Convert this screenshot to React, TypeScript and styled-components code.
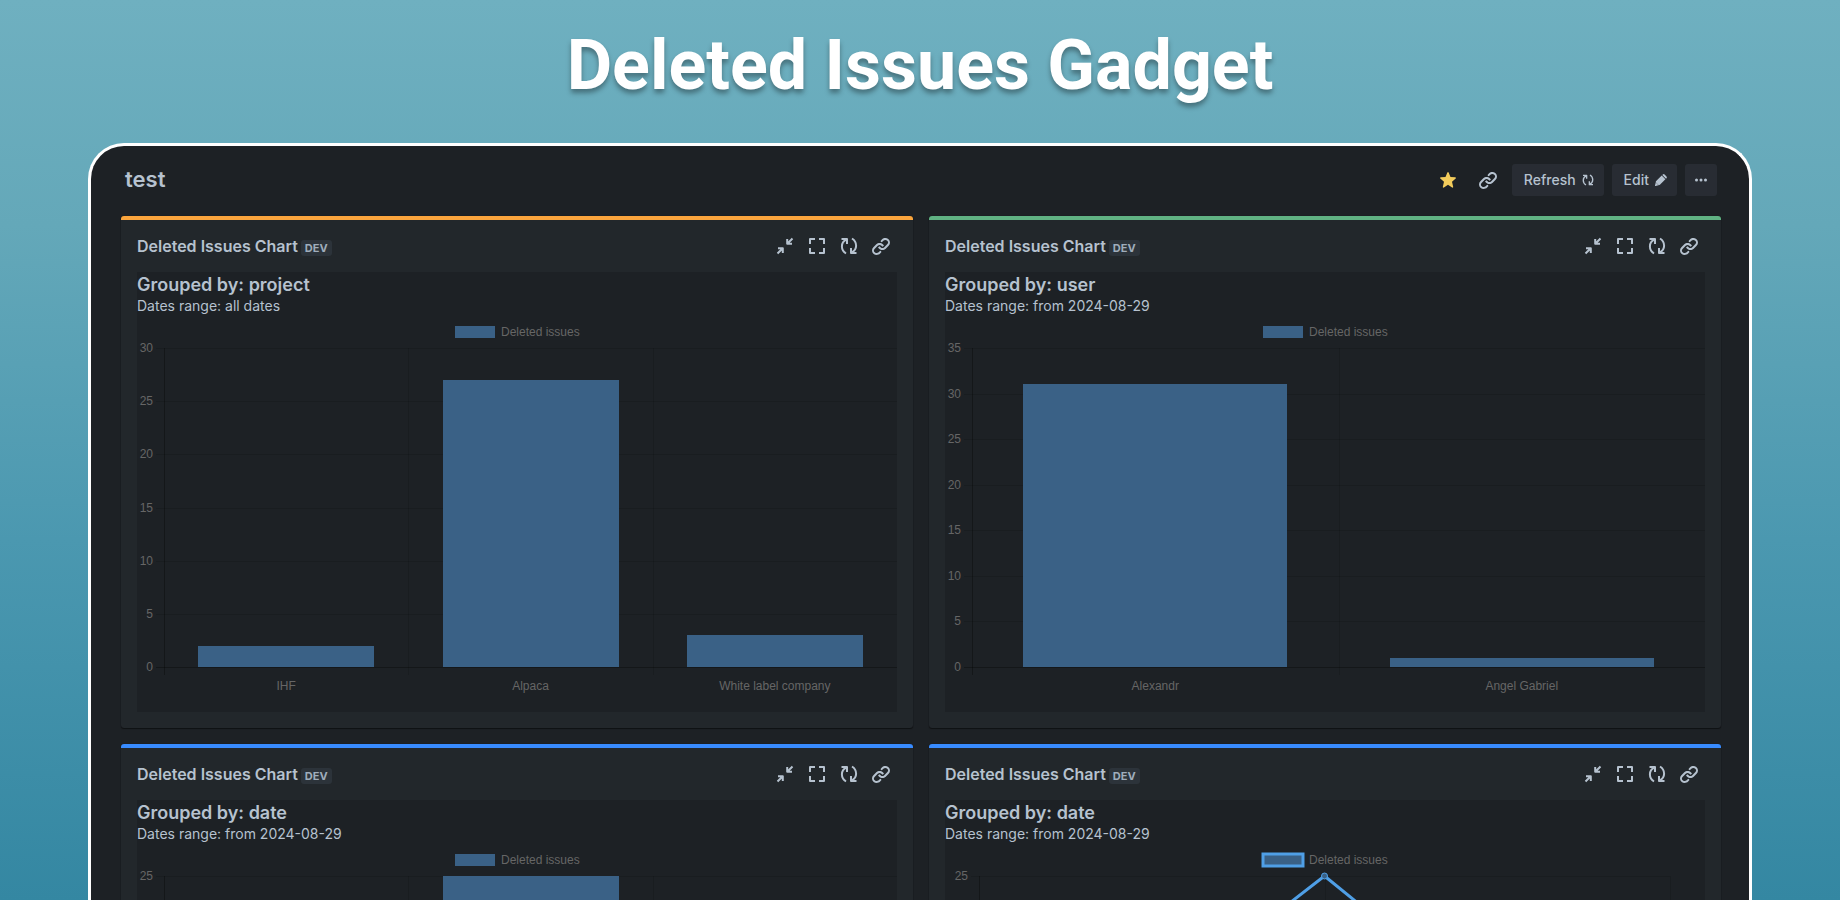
import React, { useLayoutEffect, useRef, useState } from "react";
import styled, { createGlobalStyle } from "styled-components";

const GlobalStyle = createGlobalStyle`
  *, *::before, *::after { box-sizing: border-box; }
  body { margin: 0; background: #3487a2; }
  h1, h2, h3, h4, p { margin: 0; }
`;

const Page = styled.div`
  display: flex;
  flex-direction: column;
  height: 100vh;
  overflow: hidden;
  padding: 0 88px;
  background: linear-gradient(180deg, #6fb0c0 0%, #64a8b9 25%, #4b98b0 60%, #3487a2 100%);
  font-family: Inter, "Liberation Sans", sans-serif;
  color: #b6c2cf;
`;

const PageTitle = styled.h1`
  flex: none;
  padding: 24px 0 37px;
  color: #ffffff;
  font-family: Roboto, sans-serif;
  font-size: 70px;
  font-weight: 700;
  line-height: 82px;
  text-align: center;
  text-shadow: 0 4px 5px rgba(0, 0, 0, 0.35);
`;

const Frame = styled.main`
  flex: 1;
  min-height: 0;
  overflow: hidden;
  padding: 18px 28px 0 30px;
  background: #1d2125;
  border: 3px solid #ffffff;
  border-bottom: none;
  border-radius: 36px 36px 0 0;
`;

const DashboardHeader = styled.header`
  display: flex;
  align-items: flex-start;
  justify-content: space-between;
  padding: 0 4px;
  margin-bottom: 20px;
`;

const DashboardName = styled.h2`
  font-size: 22px;
  font-weight: 600;
  line-height: 30px;
`;

const Actions = styled.div`
  display: flex;
  gap: 8px;
`;

const Button = styled.button`
  display: inline-flex;
  align-items: center;
  justify-content: center;
  gap: 4px;
  height: 32px;
  padding: 0 8px 0 12px;
  border: none;
  border-radius: 3px;
  background: #282c33;
  color: #b6c2cf;
  font-family: inherit;
  font-size: 14px;
  font-weight: 500;
  line-height: 20px;
`;

const IconButton = styled.button<{ $filled?: boolean; $color?: string }>`
  display: inline-flex;
  align-items: center;
  justify-content: center;
  width: 32px;
  height: 32px;
  padding: 0;
  border: none;
  border-radius: 3px;
  background: ${(p) => (p.$filled ? "#282c33" : "transparent")};
  color: ${(p) => p.$color ?? "#b6c2cf"};
`;

const Grid = styled.div`
  display: grid;
  grid-template-columns: repeat(2, minmax(0, 1fr));
  gap: 16px;
`;

const Card = styled.section<{ $accent: string }>`
  padding: 10px 16px 16px;
  border-top: 4px solid ${(p) => p.$accent};
  border-radius: 3px;
  background: #22272b;
  box-shadow: 0 1px 1px rgba(3, 4, 4, 0.5), 0 0 1px rgba(3, 4, 4, 0.5);
`;

const CardHeader = styled.header`
  display: flex;
  align-items: center;
  justify-content: space-between;
  height: 32px;
  margin-bottom: 10px;
`;

const CardTitle = styled.h3`
  display: flex;
  align-items: flex-end;
  gap: 3px;
  font-size: 16px;
  font-weight: 600;
  line-height: 20px;
`;

const Badge = styled.span`
  padding: 0 4px;
  border-radius: 3px;
  background: #2c333a;
  color: #9fadbc;
  font-size: 11px;
  font-weight: 700;
  line-height: 16px;
`;

const CardActions = styled.div`
  display: flex;
`;

const CardBody = styled.div`
  height: 440px;
  background: #1d2125;
`;

const GroupTitle = styled.h4`
  font-size: 18px;
  font-weight: 600;
  line-height: 26px;
`;

const DateRange = styled.p`
  font-size: 14px;
  line-height: 16px;
`;

const ChartBox = styled.div`
  margin-top: 6px;
`;

const ChartSvg = styled.svg`
  display: block;
  width: 100%;
  height: 388px;
  font-family: "Liberation Sans", Arial, sans-serif;
  font-size: 12px;
`;

const LinkIcon = () => (
  <svg width="24" height="24" viewBox="0 0 24 24" fill="currentColor" aria-hidden="true">
    <path d="M12.856 5.457l-.937.92a1.002 1.002 0 000 1.437 1.047 1.047 0 001.463 0l.984-.966c.967-.95 2.542-1.135 3.602-.288a2.54 2.54 0 01.203 3.81l-2.903 2.852a2.646 2.646 0 01-3.696 0l-1.11-1.09L9 13.57l1.108 1.089c1.822 1.788 4.802 1.788 6.622 0l2.905-2.852a4.558 4.558 0 00-.357-6.82c-1.893-1.517-4.695-1.226-6.422.47" />
    <path d="M11.144 19.543l.937-.92a1.002 1.002 0 000-1.437 1.047 1.047 0 00-1.462 0l-.985.966c-.967.95-2.542 1.135-3.602.288a2.54 2.54 0 01-.203-3.81l2.903-2.852a2.646 2.646 0 013.696 0l1.11 1.09L15 11.43l-1.108-1.089c-1.822-1.788-4.802-1.788-6.622 0l-2.905 2.852a4.558 4.558 0 00.357 6.82c1.893 1.517 4.695 1.226 6.422-.47" />
  </svg>
);

const StarIcon = () => (
  <svg width="24" height="24" viewBox="0 0 24 24" fill="currentColor" aria-hidden="true">
    <path d="M12 16.800l-4.100 2.700a.700.700 0 0 1-1.060-.760l1.160-4.940-3.700-3.300a.700.700 0 0 1 .400-1.200l4.800-.400 1.850-4.450a.700.700 0 0 1 1.300 0l1.850 4.450 4.800.400a.700.700 0 0 1 .400 1.200l-3.700 3.300 1.160 4.940a.700.700 0 0 1-1.060.760z" />
  </svg>
);

const RefreshIcon = ({ size = 24 }: { size?: number }) => (
  <svg width={size} height={size} viewBox="0 0 24 24" fill="none" stroke="currentColor" strokeWidth="2" strokeLinejoin="round" aria-hidden="true">
    <path d="M4.500 5H10V10M9.500 5.400C6.300 7 4.900 9.400 4.900 12.300C4.900 15.600 6.600 18 9 19.500" />
    <path d="M19.500 19H14V14M14.500 18.600C17.700 17 19.100 14.600 19.100 11.700C19.100 8.400 17.400 6 15 4.500" />
  </svg>
);

const CollapseIcon = () => (
  <svg width="24" height="24" viewBox="0 0 24 24" fill="none" stroke="currentColor" strokeWidth="2" strokeLinejoin="round" aria-hidden="true">
    <path d="M19.500 4.500L14.500 9.500M14.200 5V9.800H19M4.500 19.500L9.500 14.500M5 14.200H9.800V19" />
  </svg>
);

const ExpandIcon = () => (
  <svg width="24" height="24" viewBox="0 0 24 24" fill="none" stroke="currentColor" strokeWidth="2" strokeLinejoin="round" aria-hidden="true">
    <path d="M5 10V5H10M14 5H19V10M19 14V19H14M10 19H5V14" />
  </svg>
);

const EditIcon = () => (
  <svg width="16" height="16" viewBox="0 0 16 16" fill="currentColor" aria-hidden="true">
    <path d="M2 13.400a.500.500 0 0 0 .600.600l2.900-.700-2.800-2.800zM13.500 4.400L11.600 2.500a1.300 1.300 0 0 0-1.800 0L9.300 3l3.700 3.700.500-.500a1.300 1.300 0 0 0 0-1.800zM8.700 3.600L3.200 9.100c-.300.300-.400.700-.500 1.100l3.100 3.100c.400-.100.800-.200 1.100-.500L12.400 7.300z" />
  </svg>
);

const MoreIcon = () => (
  <svg width="16" height="16" viewBox="0 0 16 16" fill="currentColor" aria-hidden="true">
    <circle cx="3.500" cy="8" r="1.500" />
    <circle cx="8" cy="8" r="1.500" />
    <circle cx="12.500" cy="8" r="1.500" />
  </svg>
);

interface ChartData {
  kind: "bar" | "line";
  max: number;
  labels: string[];
  values: number[];
}

const PLOT_TOP = 28;
const PLOT_HEIGHT = 319;
const TICK = 8;
const GRID = "rgba(0, 0, 0, 0.12)";
const AXIS = "rgba(0, 0, 0, 0.3)";
const LABEL = "#666666";
const BAR = "#3a6186";
const LINE = "#4f9fe6";

function Chart({ kind, max, labels, values }: ChartData) {
  const box = useRef<HTMLDivElement>(null);
  const [width, setWidth] = useState(760);

  useLayoutEffect(() => {
    const node = box.current;
    if (!node) return;
    const measure = () => setWidth(node.clientWidth);
    measure();
    const observer = new ResizeObserver(measure);
    observer.observe(node);
    return () => observer.disconnect();
  }, []);

  const isLine = kind === "line";
  const left = isLine ? 34 : 27;
  const right = width - (isLine ? 35 : 0);
  const bottom = PLOT_TOP + PLOT_HEIGHT;
  const yOf = (v: number) => Math.round(bottom - (v / max) * PLOT_HEIGHT);
  const slots = isLine ? labels.length - 1 : labels.length;
  const step = (right - left) / slots;
  const ticks = Array.from({ length: max / 5 + 1 }, (_, i) => i * 5);
  const xLines = Array.from({ length: slots + 1 }, (_, i) => Math.round(left + i * step));
  const centerOf = (i: number) => left + step * (isLine ? i : i + 0.5);
  const legendX = Math.round(width / 2) - 62;

  return (
    <ChartBox ref={box}>
      <ChartSvg role="img" aria-label="Deleted issues">
        <rect x={legendX} y={6} width={40} height={12} fill={BAR} stroke={isLine ? LINE : "none"} strokeWidth={3} />
        <text x={legendX + 46} y={16} fill={LABEL}>Deleted issues</text>
        {ticks.map((t) => (
          <g key={t}>
            <rect x={left - TICK} y={yOf(t)} width={right - left + TICK} height={1} fill={t === 0 ? AXIS : GRID} />
            <text x={left - TICK - 3} y={yOf(t) + 4} textAnchor="end" fill={LABEL}>{t}</text>
          </g>
        ))}
        {xLines.map((x, i) => (
          <rect key={x} x={x} y={PLOT_TOP} width={1} height={PLOT_HEIGHT + TICK} fill={i === 0 ? AXIS : GRID} />
        ))}
        {!isLine && values.map((v, i) => {
          const w = Math.round(step * 0.72);
          return <rect key={labels[i]} x={Math.round(centerOf(i) - w / 2)} y={yOf(v)} width={w} height={bottom - yOf(v)} fill={BAR} />;
        })}
        {isLine && (
          <>
            <polyline points={values.map((v, i) => `${centerOf(i)},${yOf(v)}`).join(" ")} fill="none" stroke={LINE} strokeWidth={3} />
            {values.map((v, i) => (
              <circle key={labels[i]} cx={centerOf(i)} cy={yOf(v)} r={3} fill={BAR} stroke={LINE} />
            ))}
          </>
        )}
        {labels.map((name, i) => (
          <text key={name} x={centerOf(i)} y={bottom + 23} textAnchor="middle" fill={LABEL}>{name}</text>
        ))}
      </ChartSvg>
    </ChartBox>
  );
}

interface Gadget {
  accent: string;
  group: string;
  range: string;
  chart: ChartData;
}

const gadgets: Gadget[] = [
  {
    accent: "#faa53d",
    group: "project",
    range: "all dates",
    chart: { kind: "bar", max: 30, labels: ["IHF", "Alpaca", "White label company"], values: [2, 27, 3] },
  },
  {
    accent: "#60b283",
    group: "user",
    range: "from 2024-08-29",
    chart: { kind: "bar", max: 35, labels: ["Alexandr", "Angel Gabriel"], values: [31, 1] },
  },
  {
    accent: "#388bff",
    group: "date",
    range: "from 2024-08-29",
    chart: { kind: "bar", max: 25, labels: ["2024-08-29", "2024-08-30", "2024-09-02"], values: [4, 25, 3] },
  },
  {
    accent: "#388bff",
    group: "date",
    range: "from 2024-08-29",
    chart: { kind: "line", max: 25, labels: ["2024-08-29", "2024-08-30", "2024-09-02"], values: [4, 25, 3] },
  },
];

function GadgetCard({ accent, group, range, chart }: Gadget) {
  return (
    <Card $accent={accent}>
      <CardHeader>
        <CardTitle>
          Deleted Issues Chart
          <Badge>DEV</Badge>
        </CardTitle>
        <CardActions>
          <IconButton type="button" aria-label="Minimize"><CollapseIcon /></IconButton>
          <IconButton type="button" aria-label="Maximize"><ExpandIcon /></IconButton>
          <IconButton type="button" aria-label="Refresh gadget"><RefreshIcon /></IconButton>
          <IconButton type="button" aria-label="Copy gadget link"><LinkIcon /></IconButton>
        </CardActions>
      </CardHeader>
      <CardBody>
        <GroupTitle>Grouped by: {group}</GroupTitle>
        <DateRange>Dates range: {range}</DateRange>
        <Chart {...chart} />
      </CardBody>
    </Card>
  );
}

export default function App() {
  return (
    <>
      <GlobalStyle />
      <Page>
        <PageTitle>Deleted Issues Gadget</PageTitle>
        <Frame>
          <DashboardHeader>
            <DashboardName>test</DashboardName>
            <Actions>
              <IconButton type="button" aria-label="Favourite" $color="#f2cb5b"><StarIcon /></IconButton>
              <IconButton type="button" aria-label="Copy link"><LinkIcon /></IconButton>
              <Button type="button">Refresh <RefreshIcon size={16} /></Button>
              <Button type="button">Edit <EditIcon /></Button>
              <IconButton type="button" aria-label="More actions" $filled><MoreIcon /></IconButton>
            </Actions>
          </DashboardHeader>
          <Grid>
            {gadgets.map((g, i) => (
              <GadgetCard key={i} {...g} />
            ))}
          </Grid>
        </Frame>
      </Page>
    </>
  );
}
